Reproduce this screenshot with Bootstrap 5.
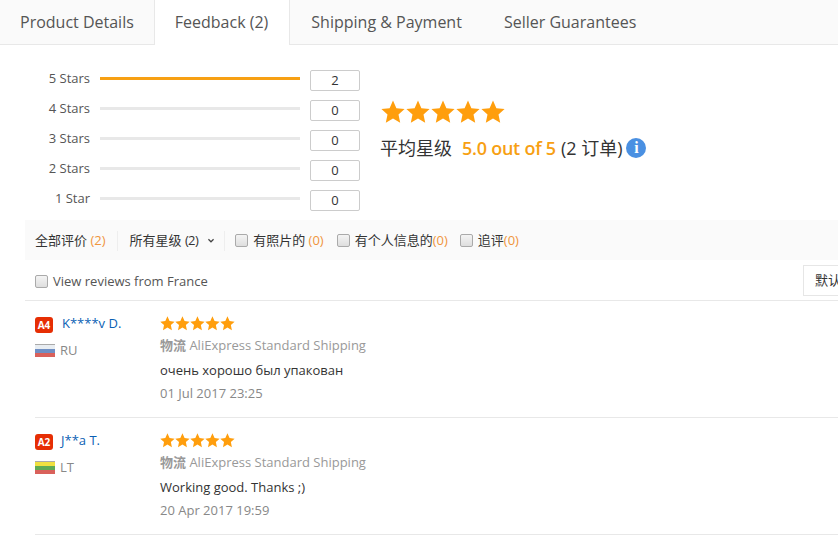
<!DOCTYPE html>
<html lang="zh">
<head>
<meta charset="utf-8">
<title>Feedback</title>
<link href="https://cdn.jsdelivr.net/npm/bootstrap@5.3.0/dist/css/bootstrap.min.css" rel="stylesheet">
<style>
html,body{height:552px;overflow:hidden}
body{font-family:"Open Sans","Noto Sans CJK SC",sans-serif;font-size:13px;color:#333;background:#fff}
.tabs-bar{height:45px;background:#fafafa;border-bottom:1px solid #e8e8e8;width:838px}
.tab-item{height:45px;padding:0 21px;font-size:16px;line-height:44px;color:#555;white-space:nowrap}
.tab-item.first{padding:0 21px 0 20px;margin-right:-1px}
.tab-item.on{background:#fff;border-left:1px solid #e8e8e8;border-right:1px solid #e8e8e8;padding:0 21px 0 20px}
.summary{height:175px;padding-left:25px}
.rate-rows{padding-top:19px;width:335px}
.rate-row{height:30px}
.rate-label{width:65px;text-align:right;line-height:28px;height:28px;color:#555;font-size:13px}
.rate-track{width:200px;height:3px;background:#e8e8e8;margin:13px 10px 0;align-self:flex-start}
.rate-fill{height:3px;background:#f7a013}
.rate-count{width:50px;height:21px;margin-top:6px;border:1px solid #ccc;border-radius:2px;text-align:center;line-height:18px;font-size:13px;color:#333;align-self:flex-start}
.avg{padding-left:20px;padding-top:55px}
.big-stars{height:24px;margin-left:1px}
.avg-line{margin-top:12px;font-size:18px;line-height:24px;color:#333;white-space:nowrap}
.avg-line b{color:#f7a013;font-weight:600;margin:0 5px 0 10px;letter-spacing:-.25px}
.info-dot{width:20px;height:20px;border-radius:50%;background:#4a90e2;color:#fff;font-family:"Liberation Serif",serif;font-weight:700;font-size:16px;line-height:20px;text-align:center;margin-left:4px}
.filter-bar{margin-left:25px;height:40px;background:#fafafa;font-size:13px;color:#333;padding:1px 0 0 10px;white-space:nowrap;width:813px}
.num{color:#f0953c}
.tight{letter-spacing:-.6px}
.sep{width:1px;height:20px;background:#eee;margin:0 12px 0 11px}
.sep.after-chev{margin:0 10px}
.box{width:13px;height:13px;border:1px solid #aaa;border-radius:2px;background:linear-gradient(#f4f4f4,#dedede);flex:none;display:block}
.chev{margin-left:10px;flex:none}
.check-item{margin-right:13px}
.check-item.mid{margin-right:12px}
.check-item .box{margin-right:5px}
.from-row{margin-left:25px;height:41px;border-bottom:1px solid #e8e8e8;padding:3px 0 0 10px;color:#555;font-size:13px;width:813px}
.from-row .box{margin-right:5px}
.sort-box{margin-left:auto;margin-right:-25px;width:60px;height:31px;border:1px solid #e6e6e6;padding-left:11px;line-height:28px;color:#333;overflow:hidden;white-space:nowrap;flex:none;margin-top:-3px}
.review{margin-left:35px;width:803px;height:117px;border-bottom:1px solid #e8e8e8}
.who{width:125px;padding-top:15px}
.who-top{height:18px}
.lvl{width:18px;height:16px;border-radius:3px;background:#e62e04;color:#fff;font-size:10px;font-weight:700;text-align:center;line-height:16px;margin-right:9px;flex:none}
.lvl.two{margin-right:8px}
.uname{color:#0a5fb4;font-size:13px;line-height:16px;white-space:nowrap;margin-bottom:4px}
.place{margin-top:8px;color:#888;line-height:16px;font-size:13px}
.flag{width:20px;height:13px;margin-right:5px;flex:none}
.body-col{padding-top:15px}
.mini-stars{height:15px;display:block}
.ship{margin-top:5px;color:#999;font-size:13px;line-height:18px;white-space:nowrap}
.ship strong{font-weight:700;color:#999}
.txt{margin-top:7px;line-height:18px;color:#333;font-size:13px}
.dt{margin-top:5px;line-height:18px;color:#888;font-size:13px}
</style>
</head>
<body>
<svg width="0" height="0" class="d-block" aria-hidden="true"><defs><path id="st" d="M12 .6l3.4 7.6 8.2.9-6.1 5.5 1.700 8.200L12 18.600l-7.200 4.200 1.700-8.200L.4 9.100l8.200-.9z" fill="#ff9e0d"/></defs></svg>
<div class="tabs-bar d-flex">
  <div class="tab-item first">Product Details</div>
  <div class="tab-item on">Feedback (2)</div>
  <div class="tab-item">Shipping &amp; Payment</div>
  <div class="tab-item">Seller Guarantees</div>
</div>

<div class="summary d-flex">
  <div class="rate-rows">
    <div class="rate-row d-flex"><div class="rate-label">5 Stars</div><div class="rate-track"><div class="rate-fill" style="width:100%"></div></div><div class="rate-count">2</div></div>
    <div class="rate-row d-flex"><div class="rate-label">4 Stars</div><div class="rate-track"></div><div class="rate-count">0</div></div>
    <div class="rate-row d-flex"><div class="rate-label">3 Stars</div><div class="rate-track"></div><div class="rate-count">0</div></div>
    <div class="rate-row d-flex"><div class="rate-label">2 Stars</div><div class="rate-track"></div><div class="rate-count">0</div></div>
    <div class="rate-row d-flex"><div class="rate-label">1 Star</div><div class="rate-track"></div><div class="rate-count">0</div></div>
  </div>
  <div class="avg">
    <svg class="big-stars d-block" width="124" height="24" viewBox="0 0 124 24"><use href="#st"/><use href="#st" x="25"/><use href="#st" x="50"/><use href="#st" x="75"/><use href="#st" x="100"/></svg>
    <div class="avg-line d-flex align-items-center"><span>平均星级</span><b>5.0 out of 5</b><span>(2 订单)</span><span class="info-dot">i</span></div>
  </div>
</div>

<div class="filter-bar d-flex align-items-center">
  <span>全部评价 <span class="num">(2)</span></span>
  <span class="sep"></span>
  <span>所有星级 <span class="tight">(2)</span></span>
  <svg class="chev" width="6" height="5" viewBox="0 0 7 5"><path d="M.5 1l3 3 3-3" fill="none" stroke="#444" stroke-width="1.400"/></svg>
  <span class="sep after-chev"></span>
  <span class="check-item d-flex align-items-center"><span class="box"></span><span>有照片的 <span class="num">(0)</span></span></span>
  <span class="check-item mid d-flex align-items-center"><span class="box"></span><span>有个人信息的<span class="num">(0)</span></span></span>
  <span class="check-item d-flex align-items-center"><span class="box"></span><span>追评<span class="num">(0)</span></span></span>
</div>

<div class="from-row d-flex align-items-center">
  <span class="box"></span><span>View reviews from France</span>
  <span class="sort-box">默认</span>
</div>

<div class="review d-flex">
  <div class="who">
    <div class="who-top d-flex align-items-center"><span class="lvl">A4</span><span class="uname">K****v D.</span></div>
    <div class="place d-flex align-items-center">
      <svg class="flag" viewBox="0 0 20 13"><rect width="20" height="13" fill="#aaa"/><rect y="1" width="20" height="4" fill="#e8edf2"/><rect y="5" width="20" height="4" fill="#6f8fc4"/><rect y="9" width="20" height="4" fill="#d9615b"/></svg>
      <span>RU</span>
    </div>
  </div>
  <div class="body-col">
    <svg class="mini-stars" width="75" height="15" viewBox="0 0 75 15"><use href="#st" transform="scale(.62)"/><use href="#st" transform="translate(15 0) scale(.62)"/><use href="#st" transform="translate(30 0) scale(.62)"/><use href="#st" transform="translate(45 0) scale(.62)"/><use href="#st" transform="translate(60 0) scale(.62)"/></svg>
    <div class="ship"><strong>物流</strong> AliExpress Standard Shipping</div>
    <div class="txt">очень хорошо был упакован</div>
    <div class="dt">01 Jul 2017 23:25</div>
  </div>
</div>

<div class="review d-flex">
  <div class="who">
    <div class="who-top d-flex align-items-center"><span class="lvl two">A2</span><span class="uname">J**a T.</span></div>
    <div class="place d-flex align-items-center">
      <svg class="flag" viewBox="0 0 20 13"><rect width="20" height="13" fill="#aaa"/><rect y="1" width="20" height="4" fill="#f0e040"/><rect y="5" width="20" height="4" fill="#5faa55"/><rect y="9" width="20" height="4" fill="#d9615b"/></svg>
      <span>LT</span>
    </div>
  </div>
  <div class="body-col">
    <svg class="mini-stars" width="75" height="15" viewBox="0 0 75 15"><use href="#st" transform="scale(.62)"/><use href="#st" transform="translate(15 0) scale(.62)"/><use href="#st" transform="translate(30 0) scale(.62)"/><use href="#st" transform="translate(45 0) scale(.62)"/><use href="#st" transform="translate(60 0) scale(.62)"/></svg>
    <div class="ship"><strong>物流</strong> AliExpress Standard Shipping</div>
    <div class="txt">Working good. Thanks ;)</div>
    <div class="dt">20 Apr 2017 19:59</div>
  </div>
</div>
<script src="https://cdn.jsdelivr.net/npm/bootstrap@5.3.0/dist/js/bootstrap.bundle.min.js"></script>
</body>
</html>
